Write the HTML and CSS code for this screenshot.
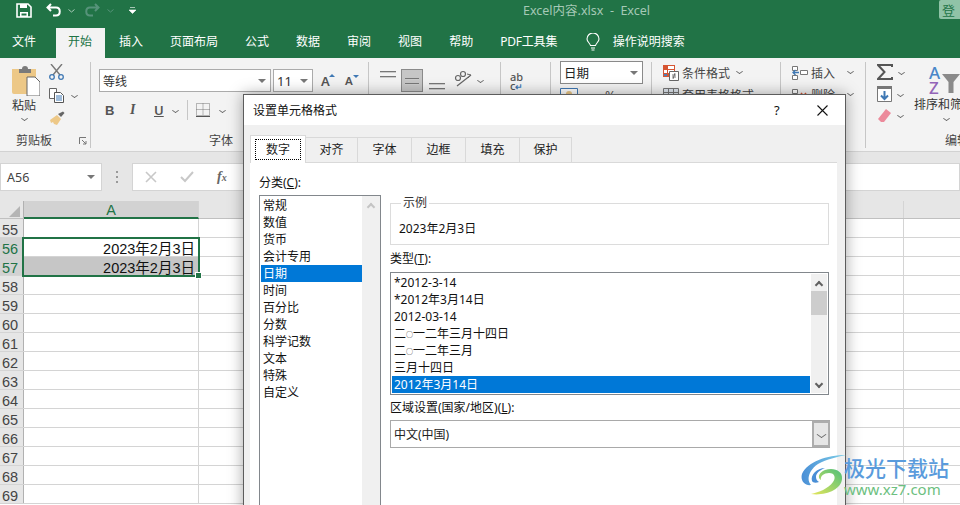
FILE: index.html
```html
<!DOCTYPE html>
<html lang="zh-CN">
<head>
  <meta charset="UTF-8">
  <title>Excel内容.xlsx - Excel</title>
  <link rel="stylesheet" href="styles.css">
</head>
<body>
<div class="app">
  <div class="titlebar">
    <div class="qat">
      <svg class="q-save" width="16" height="15" viewBox="0 0 16 15"><path d="M1 1h11l3 3v10H1z" fill="none" stroke="#fff" stroke-width="1.6"/><path d="M4 1h7v4H4zM4 9h8v5H4z" fill="#fff"/><path d="M5.500 10.500h5v2h-5z" fill="#217346"/></svg>
      <svg class="q-undo" width="16" height="14" viewBox="0 0 16 14"><path d="M5 1L1.500 4.500 5 8M2 4.500h8c5 0 5 8 0 8H7" fill="none" stroke="#fff" stroke-width="2"/></svg>
      <svg class="q-chev" width="7" height="4" viewBox="0 0 7 4"><path d="M.5.500l3 2.500 3-2.500" fill="none" stroke="#a9cbb8"/></svg>
      <svg class="q-redo" width="16" height="14" viewBox="0 0 16 14"><path d="M11 1l3.500 3.500L11 8M14 4.500H6c-5 0-5 8 0 8h3" fill="none" stroke="#56937a" stroke-width="2"/></svg>
      <svg class="q-chev2" width="7" height="4" viewBox="0 0 7 4"><path d="M.5.500l3 2.500 3-2.500" fill="none" stroke="#56937a"/></svg>
      <svg class="q-more" width="7" height="7" viewBox="0 0 7 7"><path d="M1 .500h5M0 3h7L3.500 6.500z" fill="#fff" stroke="#fff" stroke-width=".6"/></svg>
    </div>
    <div class="doc-name">Excel内容.xlsx&nbsp; - &nbsp;Excel</div>
    <div class="login">登</div>
  </div>

  <div class="tabs">
    <span class="tab tab-file">文件</span>
    <span class="tab tab-active">开始</span>
    <span class="tab">插入</span>
    <span class="tab">页面布局</span>
    <span class="tab">公式</span>
    <span class="tab">数据</span>
    <span class="tab">审阅</span>
    <span class="tab">视图</span>
    <span class="tab">帮助</span>
    <span class="tab tab-pdf">PDF工具集</span>
    <svg class="bulb" width="14" height="18" viewBox="0 0 14 18"><path d="M4.500 12.500C4 10 1 9 1 6a6 6 0 0 1 12 0c0 3-3 4-3.500 6.500zM5 15h4M5.500 17h3" fill="none" stroke="#fff" stroke-width="1.100"/></svg>
    <span class="tab tab-search">操作说明搜索</span>
  </div>

  <div class="ribbon">
    <section class="group g-clip">
      <div class="group-body clip-body">
        <div class="paste">
          <svg width="28" height="30" viewBox="0 0 28 30"><path d="M0 3h24v25H2a2 2 0 0 1-2-2z" fill="#edc887"/><path d="M7 3h3a3 3 0 0 1 6 0h3v4H7z" fill="#7a7a7a"/><path d="M15 11h8l5 5v14H15z" fill="#fff" stroke="#666"/></svg>
          <span>粘贴</span>
          <i class="chev"></i>
        </div>
        <div class="clip-tools">
          <svg width="15" height="16" viewBox="0 0 15 16"><path d="M2 0l9 11M13 0L4 11" stroke="#777" stroke-width="1.400"/><circle cx="3" cy="13" r="2.300" fill="none" stroke="#3f78b4" stroke-width="1.300"/><circle cx="12" cy="13" r="2.300" fill="none" stroke="#3f78b4" stroke-width="1.300"/></svg>
          <div class="copy-row">
            <svg width="15" height="15" viewBox="0 0 15 15"><path d="M.5.500h7v10h-7z" fill="#fff" stroke="#666"/><path d="M5.500 4.500h6l3 3v7h-9z" fill="#fff" stroke="#555"/><path d="M7 8h6M7 10h6M7 12h6" stroke="#3f78b4"/></svg>
            <i class="chev"></i>
          </div>
          <svg width="16" height="15" viewBox="0 0 16 15"><path d="M9 3l3 3 3.500-4L14 .5z" fill="#666"/><path d="M1 9l7-5 4 4-4 6-3-1-1-2-2 1z" fill="#edc887"/></svg>
        </div>
      </div>
      <div class="group-label clip-label"><span>剪贴板</span>
        <svg width="8" height="8" viewBox="0 0 8 8"><path d="M.5 7V.5H7M3 3l4 4M7 4v3H4" fill="none" stroke="#777"/></svg>
      </div>
    </section>

    <section class="group g-font">
      <div class="font-row">
        <div class="combo combo-font"><span>等线</span><i class="drop"></i></div>
        <div class="combo combo-size"><span>11</span><i class="drop"></i></div>
        <span class="grow-a">A<b class="up"></b></span>
        <span class="grow-a small">A<b class="down"></b></span>
      </div>
      <div class="font-row row-two">
        <b class="btn-b">B</b>
        <i class="btn-i">I</i>
        <u class="btn-u">U</u>
        <i class="chev"></i>
        <span class="vsep"></span>
        <svg width="14" height="14" viewBox="0 0 14 14"><path d="M.5.500h13v12H.5zM7 .5v12M.5 6.500h13" fill="none" stroke="#777" stroke-dasharray="1 1"/><path d="M0 13.500h14" stroke="#555"/></svg>
        <i class="chev"></i>
      </div>
      <div class="group-label font-label">字体</div>
    </section>

    <section class="group g-align">
      <div class="align-body">
        <span class="lines"><i></i><i></i></span>
        <span class="lines lines-on"><i></i><i></i></span>
        <span class="lines lines-low"><i></i><i></i></span>
        <svg class="orient" width="18" height="18" viewBox="0 0 18 18"><path d="M3 17L17 6" stroke="#666" stroke-width="1.200"/><path d="M14 9l3-3-4-1" fill="none" stroke="#666"/><circle cx="4" cy="9" r="2.500" fill="none" stroke="#666" stroke-width="1.200"/><circle cx="9" cy="5" r="2.500" fill="none" stroke="#666" stroke-width="1.200"/></svg>
        <i class="chev"></i>
      </div>
    </section>
    <section class="group g-wrap">
      <div class="wrap-icon"><span>ab</span><span>c<b>↵</b></span></div>
    </section>

    <section class="group g-num">
      <div class="combo combo-num"><span>日期</span><i class="drop"></i></div>
      <div class="num-row">
        <svg width="18" height="14" viewBox="0 0 18 14"><path d="M.5.500h17v11H.5z" fill="#fff" stroke="#3f78b4"/><circle cx="9" cy="6" r="3" fill="#edc887"/></svg>
        <i class="chev"></i>
        <span>%</span>
        <span class="num-comma">,</span>
      </div>
    </section>

    <section class="group g-style">
      <div class="style-row">
        <svg width="16" height="16" viewBox="0 0 16 16"><path d="M0 0h12v12H0z" fill="#d65532"/><path d="M5 1h6v3H5zM1 5h3v3H1zM5 5h6v3H5z" fill="#fff"/><path d="M1 9h3v2H1z" fill="#4e7fb5"/><path d="M6.500 6.500h9v9h-9z" fill="#fff" stroke="#666"/><path d="M9 10h4M9 12h4M10 14l2-6" stroke="#555" stroke-width=".8"/></svg>
        <span>条件格式</span><i class="chev"></i>
      </div>
      <div class="style-row row-low">
        <svg width="16" height="14" viewBox="0 0 16 14"><path d="M.5.500h15v13H.5zM5.500.5v13M10.500.5v13M.5 4.500h15M.5 9h15" fill="#dfe6ee" stroke="#777"/></svg>
        <span>套用表格格式</span>
      </div>
    </section>

    <section class="group g-cells">
      <div class="style-row">
        <svg width="16" height="16" viewBox="0 0 16 16"><path d="M.5 1.500h5v4h-5zM.5 10.500h5v4h-5zM8.500 5.500h7v4h-7z" fill="#fff" stroke="#777"/><path d="M7 7.500H1M3.500 5L1 7.500 3.500 10" fill="none" stroke="#3f78b4" stroke-width="1.300"/></svg>
        <span>插入</span><i class="chev"></i>
      </div>
      <div class="style-row row-low">
        <svg width="16" height="14" viewBox="0 0 16 14"><path d="M.5 1.500h5v4h-5zM.5 9.500h5v4h-5z" fill="#fff" stroke="#777"/><path d="M9 5l5 6M14 5l-5 6" stroke="#d65532" stroke-width="1.500"/></svg>
        <span>删除</span><i class="chev"></i>
      </div>
    </section>

    <section class="group g-edit">
      <div class="edit-col">
        <div class="edit-row"><svg width="16" height="16" viewBox="0 0 16 16"><path d="M15 3V1H1l6.500 7L1 15h14v-2" fill="none" stroke="#555" stroke-width="2"/></svg><i class="chev"></i></div>
        <div class="edit-row"><svg width="15" height="16" viewBox="0 0 15 16"><path d="M.5.500h14v15H.5z" fill="#fff" stroke="#777"/><path d="M0 0h15v3H0z" fill="#777"/><path d="M7.500 5v8M4 9.500l3.500 3.500L11 9.500" fill="none" stroke="#3f78b4" stroke-width="2"/></svg><i class="chev"></i></div>
        <div class="edit-row"><svg width="15" height="15" viewBox="0 0 15 15"><path d="M9 1l5 4-7 9H4L1 11z" fill="#ec8a9b"/></svg><i class="chev"></i></div>
      </div>
      <div class="sort">
        <div class="sort-icon"><span class="az"><em>A</em><em class="z">Z</em></span>
          <svg width="18" height="20" viewBox="0 0 18 20"><path d="M0 0h18l-6.500 8v11h-5V8z" fill="#8a8a8a"/></svg>
        </div>
        <span class="sort-text">排序和筛选</span>
        <i class="chev"></i>
      </div>
      <div class="group-label edit-label">编辑</div>
    </section>
  </div>

  <div class="formula">
    <div class="namebox"><span>A56</span><i class="drop"></i></div>
    <span class="dots"></span>
    <div class="fx-box">
      <svg width="12" height="12" viewBox="0 0 12 12"><path d="M1 1l10 10M11 1L1 11" stroke="#c8c8c8" stroke-width="1.600"/></svg>
      <svg width="14" height="12" viewBox="0 0 14 12"><path d="M1 6l4 4 8-9" fill="none" stroke="#c8c8c8" stroke-width="2"/></svg>
      <span class="fx">f<small>x</small></span>
    </div>
  </div>

  <div class="sheet">
    <div class="row head">
      <span class="rh corner"><i></i></span>
      <span class="ca on">A</span>
      <span class="cb"></span>
      <span class="cc"></span>
    </div>
    <div class="row"><span class="rh">55</span><span class="ca"></span><span class="cb"></span><span class="cc"></span></div>
    <div class="row"><span class="rh on">56</span><span class="ca">2023年2月3日</span><span class="cb"></span><span class="cc"></span></div>
    <div class="row"><span class="rh on">57</span><span class="ca sel">2023年2月3日</span><span class="cb"></span><span class="cc"></span></div>
    <div class="row"><span class="rh">58</span><span class="ca"></span><span class="cb"></span><span class="cc"></span></div>
    <div class="row"><span class="rh">59</span><span class="ca"></span><span class="cb"></span><span class="cc"></span></div>
    <div class="row"><span class="rh">60</span><span class="ca"></span><span class="cb"></span><span class="cc"></span></div>
    <div class="row"><span class="rh">61</span><span class="ca"></span><span class="cb"></span><span class="cc"></span></div>
    <div class="row"><span class="rh">62</span><span class="ca"></span><span class="cb"></span><span class="cc"></span></div>
    <div class="row"><span class="rh">63</span><span class="ca"></span><span class="cb"></span><span class="cc"></span></div>
    <div class="row"><span class="rh">64</span><span class="ca"></span><span class="cb"></span><span class="cc"></span></div>
    <div class="row"><span class="rh">65</span><span class="ca"></span><span class="cb"></span><span class="cc"></span></div>
    <div class="row"><span class="rh">66</span><span class="ca"></span><span class="cb"></span><span class="cc"></span></div>
    <div class="row"><span class="rh">67</span><span class="ca"></span><span class="cb"></span><span class="cc"></span></div>
    <div class="row"><span class="rh">68</span><span class="ca"></span><span class="cb"></span><span class="cc"></span></div>
    <div class="row"><span class="rh">69</span><span class="ca"></span><span class="cb"></span><span class="cc"></span></div>
    <div class="selection"><i></i></div>
  </div>

  <div class="dialog">
    <div class="dlg-title">
      <span>设置单元格格式</span>
      <span class="dlg-help">?</span>
      <svg width="11" height="11" viewBox="0 0 11 11"><path d="M.5.500l10 10M10.500.5l-10 10" stroke="#111" stroke-width="1.100"/></svg>
    </div>
    <div class="dlg-tabs">
      <span class="dtab dtab-on"><span>数字</span></span>
      <span class="dtab w52">对齐</span>
      <span class="dtab">字体</span>
      <span class="dtab">边框</span>
      <span class="dtab">填充</span>
      <span class="dtab w52">保护</span>
    </div>
    <div class="panel">
      <div class="col-left">
        <div class="lbl">分类(<u>C</u>):</div>
        <div class="catlist">
          <ul>
            <li>常规</li>
            <li>数值</li>
            <li>货币</li>
            <li>会计专用</li>
            <li class="picked">日期</li>
            <li>时间</li>
            <li>百分比</li>
            <li>分数</li>
            <li>科学记数</li>
            <li>文本</li>
            <li>特殊</li>
            <li>自定义</li>
          </ul>
          <div class="vbar"><i class="arrow-up dim"></i></div>
        </div>
      </div>
      <div class="col-right">
        <fieldset class="sample">
          <legend>示例</legend>
          <div>2023年2月3日</div>
        </fieldset>
        <div class="lbl lbl-type">类型(<u>T</u>):</div>
        <div class="typelist">
          <ul>
            <li>*2012-3-14</li>
            <li>*2012年3月14日</li>
            <li>2012-03-14</li>
            <li>二<span class="ling">○</span>一二年三月十四日</li>
            <li>二<span class="ling">○</span>一二年三月</li>
            <li>三月十四日</li>
            <li class="picked">2012年3月14日</li>
          </ul>
          <div class="vbar small">
            <i class="arrow-up"></i>
            <b class="thumb"></b>
            <i class="arrow-down"></i>
          </div>
        </div>
        <div class="lbl lbl-locale">区域设置(国家/地区)(<u>L</u>):</div>
        <div class="locale">
          <span>中文(中国)</span>
          <span class="locale-btn"><i class="chev"></i></span>
        </div>
      </div>
    </div>
  </div>

  <div class="mark">
    <svg width="46" height="42" viewBox="0 0 46 42">
      <defs>
        <linearGradient id="sw1" x1="0" y1="0" x2="1" y2="0"><stop offset="0" stop-color="#4a8fd6"/><stop offset="1" stop-color="#7fd0e8"/></linearGradient>
        <linearGradient id="sw2" x1="0" y1="1" x2="1" y2="0"><stop offset="0" stop-color="#e6e65a"/><stop offset="1" stop-color="#4fbf7a"/></linearGradient>
      </defs>
      <path d="M45 1C26 1 6 8 1 20c-2 7 3 12 9 11C5 26 8 16 17 10 26 5 36 3 45 1z" fill="url(#sw1)"/>
      <path d="M10 40c14 2 30-4 31-15 1-8-8-12-17-9-6 2-8 8-4 10-1-4 3-7 8-7 6 0 7 5 4 9-5 7-14 10-22 12z" fill="url(#sw2)"/>
      <path d="M11 27c-2-6 5-13 13-13-5 2-9 5-9 9 0 2 1 4 3 5-3 1-6 1-7-1z" fill="#4a8fd6"/>
    </svg>
    <div class="mark-text">
      <strong>极光下载站</strong>
      <span>www.xz7.com</span>
    </div>
  </div>
</div>
</body>
</html>
```

FILE: styles.css
```css
html, body {
  margin: 0;
  padding: 0;
  height: 100%;
  overflow: hidden;
}
body {
  font-family: "Noto Sans", "Noto Sans CJK SC", sans-serif;
  font-size: 12px;
  color: #444;
}
.app {
  position: relative;
  width: 960px;
  height: 505px;
  overflow: hidden;
  background: #fff;
}
ul {
  list-style: none;
  margin: 0;
  padding: 0;
}

/* title bar */
.titlebar {
  height: 28px;
  background: #217346;
  display: flex;
  position: relative;
}
.qat {
  display: flex;
  align-items: flex-start;
  padding-left: 16px;
  width: 523px;
  box-sizing: border-box;
}
.q-save { margin-top: 3px; }
.q-undo { margin: 3px 0 0 14px; }
.q-chev { margin: 9px 0 0 6px; }
.q-redo { margin: 3px 0 0 9px; }
.q-chev2 { margin: 9px 0 0 7px; }
.q-more { margin: 7px 0 0 15px; }
.doc-name {
  flex: 1;
  color: #a5c9b6;
  line-height: 21px;
  font-size: 12.500px;
}
.login {
  width: 21px;
  height: 19px;
  line-height: 20px;
  padding-left: 3px;
  box-sizing: border-box;
  border-radius: 2px 0 0 2px;
  background: #90c3a7;
  color: #217346;
  font-size: 13px;
  overflow: hidden;
}

/* tabs */
.tabs {
  height: 30px;
  background: #217346;
  display: flex;
  align-items: stretch;
}
.tab {
  color: #fff;
  line-height: 27px;
  padding: 0 13.500px;
}
.tab-file { padding: 0 20px 0 12px; }
.tab-active {
  padding: 0 13px 0 12px;
  background: #f3f3f3;
  color: #217346;
}
.tab:nth-child(3) { padding-left: 14px; }
.tab-pdf { letter-spacing: -.2px; }
.tab-search { padding: 0 0 0 13px; }
.bulb { margin: 5px 0 0 15px; }

/* ribbon */
.ribbon {
  height: 94px;
  padding-top: 4px;
  box-sizing: border-box;
  background: #f3f3f3;
  border-bottom: 1px solid #d2d2d2;
  display: flex;
  align-items: flex-start;
}
.group {
  height: 86px;
  box-sizing: border-box;
  flex: none;
  border-right: 1px solid #c6c6c6;
  display: flex;
  flex-direction: column;
  position: relative;
}
.group-label {
  margin-top: auto;
  line-height: 14px;
  text-align: center;
}
.g-clip { width: 91px; }
.g-font { width: 278px; padding-left: 8px; }
.g-align { width: 132px; }
.g-wrap { width: 50px; }
.g-num { width: 101px; padding: 0 0 0 9px; }
.g-style { width: 129px; padding-left: 11px; }
.g-cells { width: 85px; padding-left: 11px; }
.g-edit { width: 95px; border: none; flex-direction: row; align-items: flex-start; padding-left: 11px; }

.chev {
  display: inline-block;
  width: 4px;
  height: 4px;
  border-right: 1px solid #666;
  border-bottom: 1px solid #666;
  transform: scale(1, .7) rotate(45deg);
}
.drop {
  width: 0;
  height: 0;
  border-left: 4px solid transparent;
  border-right: 4px solid transparent;
  border-top: 4px solid #777;
}

.clip-body {
  display: flex;
  padding: 4px 0 0 12px;
}
.paste {
  width: 28px;
  display: flex;
  flex-direction: column;
  align-items: flex-start;
  line-height: 16px;
  color: #333;
}
.paste span { margin-top: 2px; font-size: 12px; white-space: nowrap; }
.paste .chev { margin: 2px 0 0 10px; }
.clip-tools {
  margin: -2px 0 0 9px;
  display: flex;
  flex-direction: column;
  gap: 8px;
}
.copy-row {
  display: flex;
  align-items: center;
  gap: 8px;
}
.clip-label {
  display: flex;
  justify-content: space-between;
  align-items: center;
  padding: 0 3px 0 16px;
}

.font-row {
  display: flex;
  align-items: center;
  margin-top: 7px;
}
.combo {
  height: 23px;
  flex: none;
  box-sizing: border-box;
  border: 1px solid #ababab;
  background: #fff;
  display: flex;
  align-items: center;
  justify-content: space-between;
  padding: 0 4px 0 3px;
  color: #333;
  font-size: 12px;
}
.combo-font { width: 172px; }
.combo-size { width: 40px; margin-left: 2px; }
.combo-size span { font-size: 13px; }
.combo-num {
  width: 83px;
  margin-top: -1px;
  border-color: #8a8a8a;
  font-size: 12.500px;
  color: #222;
  padding-left: 3px;
}
.num-row {
  display: flex;
  align-items: center;
  margin-top: 2px;
  font-size: 13px;
  color: #555;
}
.num-row .chev { margin: 0 0 0 8px; }
.num-row span { margin-left: 14px; }
.num-row .num-comma { margin-left: 18px; }
.grow-a {
  position: relative;
  margin-left: 8px;
  width: 14px;
  font-size: 13px;
  font-weight: 600;
  color: #555;
}
.grow-a.small { margin-left: 10px; font-size: 11.500px; }
.grow-a b {
  position: absolute;
  top: 2px;
  right: 0;
  width: 0;
  height: 0;
  border-left: 3px solid transparent;
  border-right: 3px solid transparent;
}
.grow-a .up { border-bottom: 3px solid #3f78b4; }
.grow-a .down { border-top: 3px solid #3f78b4; }
.row-two {
  margin-top: 7px;
  color: #555;
  padding-left: 6px;
  height: 22px;
  font-size: 13px;
}
.btn-b { width: 8px; font-weight: 700; font-family: "Liberation Sans", sans-serif; }
.btn-i { width: 8px; margin-left: 17px; font-family: "Liberation Serif", serif; font-size: 14px; font-weight: 700; }
.btn-u { width: 9px; margin-left: 16px; font-weight: 600; }
.row-two .chev { margin: 0 9px 0 10px; }
.vsep {
  width: 1px;
  height: 20px;
  background: #c6c6c6;
  margin-right: 8px;
}
.font-label { padding-right: 25px; }

.align-body {
  display: flex;
  align-items: center;
  padding: 7px 0 0 11px;
}
.lines {
  width: 16px;
  height: 23px;
  box-sizing: border-box;
  display: flex;
  flex-direction: column;
  gap: 3px;
  justify-content: flex-start;
  padding-top: 2px;
}
.lines i {
  display: block;
  height: 1px;
  background: #777;
  border-bottom: 1px solid #ccc;
}
.lines-on {
  width: 22px;
  margin-left: 5px;
  padding: 8px 3px 0;
  background: #c6c6c6;
  border: 1px solid #8a8a8a;
}
.lines-low {
  margin-left: 6px;
  padding-top: 14px;
}
.orient { margin: -6px 0 0 9px; }
.align-body .chev { margin-left: 6px; }

.wrap-icon {
  margin: 10px 0 0 9px;
  font-size: 11px;
  font-weight: 500;
  color: #555;
}
.wrap-icon span { display: block; height: 9px; line-height: 9px; }
.wrap-icon b { color: #3f78b4; font-size: 9px; }

.style-row {
  display: flex;
  align-items: center;
  height: 21px;
  color: #444;
  font-size: 12px;
}
.style-row span { margin-left: 3px; white-space: nowrap; }
.style-row .chev { margin-left: 7px; margin-top: -2px; }
.row-low { height: 23px; }
.g-cells .style-row .chev { margin-left: 13px; }

.edit-col {
  width: 32px;
  flex: none;
  display: flex;
  flex-direction: column;
  gap: 6px;
  padding-top: 2px;
}
.edit-row {
  display: flex;
  align-items: center;
  gap: 6px;
}
.sort {
  margin-left: 5px;
  width: 60px;
  flex: none;
  display: flex;
  flex-direction: column;
  align-items: flex-start;
}
.sort-icon {
  display: flex;
  margin: 3px 0 0 15px;
}
.az {
  width: 13px;
  display: flex;
  flex-direction: column;
  font-weight: 500;
  font-size: 17px;
  line-height: 15px;
}
.az em { font-style: normal; color: #4a86c8; }
.az .z { color: #9365b8; }
.sort-icon svg { margin-top: 9px; margin-left: 0; }
.sort-text {
  margin-top: 2px;
  line-height: 16px;
  white-space: nowrap;
  color: #333;
}
.sort .chev { margin: 3px 0 0 30px; }
.edit-label {
  position: absolute;
  left: 79px;
  bottom: 0;
  white-space: nowrap;
}

/* formula bar */
.formula {
  height: 49px;
  background: #e6e6e6;
  display: flex;
  align-items: flex-start;
  padding-top: 11px;
  box-sizing: border-box;
}
.namebox {
  width: 102px;
  height: 28px;
  box-sizing: border-box;
  background: #fff;
  border: 1px solid #d4d4d4;
  display: flex;
  align-items: center;
  justify-content: space-between;
  padding: 0 6px;
  font-size: 12.500px;
}
.dots {
  width: 2px;
  height: 12px;
  margin: 8px 14px 0 14px;
  background: repeating-linear-gradient(#999 0 2px, transparent 2px 5px);
}
.fx-box {
  flex: 1;
  height: 28px;
  box-sizing: border-box;
  background: #fff;
  border: 1px solid #d4d4d4;
  display: flex;
  align-items: center;
  padding-left: 12px;
  gap: 23px;
}
.fx {
  font-family: "Liberation Serif", serif;
  font-style: italic;
  font-weight: 700;
  font-size: 14px;
  color: #666;
}
.fx small { font-size: 10px; }

/* sheet */
.sheet {
  position: relative;
  font-family: "Liberation Sans", "Noto Sans CJK SC", sans-serif;
  font-size: 14.500px;
  color: #111;
}
.row {
  display: flex;
  height: 19px;
  box-sizing: border-box;
  line-height: 23px;
  border-bottom: 1px solid #d4d4d4;
}
.row.head {
  height: 18px;
  background: #e6e6e6;
  border-bottom: 1px solid #c0c0c0;
}
.rh {
  width: 24px;
  flex: none;
  box-sizing: border-box;
  background: #e6e6e6;
  border-right: 1px solid #b1b1b1;
  padding-left: 2px;
  color: #444;
}
.rh.on {
  background: #d2d2d2;
  color: #217346;
}
.corner { position: relative; }
.corner i {
  position: absolute;
  left: 9px;
  top: 5px;
  border-left: 11px solid transparent;
  border-bottom: 11px solid #b5b5b5;
}
.ca {
  width: 175px;
  flex: none;
  box-sizing: border-box;
  border-right: 1px solid #d4d4d4;
  text-align: right;
  padding-right: 3px;
  white-space: nowrap;
  overflow: hidden;
}
.ca.on {
  background: #d2d2d2;
  border-bottom: 2px solid #217346;
  text-align: center;
  padding: 0;
  color: #217346;
  height: 18px;
  line-height: 18px;
}
.ca.sel {
  background: #c6c6c6;
}
.cb {
  width: 705px;
  flex: none;
  box-sizing: border-box;
  border-right: 1px solid #d4d4d4;
}
.cc { flex: 1; }
.selection {
  position: absolute;
  left: 22px;
  top: 36px;
  width: 178px;
  height: 40px;
  box-sizing: border-box;
  border: 2px solid #217346;
}
.selection i {
  position: absolute;
  right: -4px;
  bottom: -4px;
  width: 5px;
  height: 5px;
  background: #217346;
  border: 1px solid #fff;
}

/* dialog */
.dialog {
  position: absolute;
  left: 243px;
  top: 94px;
  width: 603px;
  height: 430px;
  box-sizing: border-box;
  border: 1px solid #5c5c5c;
  background: #f0f0f0;
  box-shadow: 0 0 14px rgba(0, 0, 0, .35);
  color: #111;
}
.dlg-title {
  height: 30px;
  background: #fff;
  display: flex;
  align-items: center;
  padding-left: 9px;
}
.dlg-title span:first-child { width: 521px; }
.dlg-help { width: 43px; font-size: 13px; }
.dlg-tabs {
  height: 37px;
  padding: 10px 0 0 6px;
  box-sizing: border-box;
  display: flex;
  align-items: flex-end;
  position: relative;
  z-index: 1;
}
.dtab {
  width: 54px;
  height: 25px;
  box-sizing: border-box;
  border: 1px solid #d9d9d9;
  border-left: none;
  border-bottom: none;
  text-align: center;
  line-height: 24px;
  color: #222;
}
.w52 { width: 52px; }
.dtab-on {
  width: 56px;
  height: 28px;
  margin-bottom: -1px;
  background: #fff;
  border-left: 1px solid #d9d9d9;
  padding: 3px 4px;
}
.dtab-on span {
  display: block;
  height: 21px;
  line-height: 20px;
  border: 1px dotted #000;
  box-sizing: border-box;
}
.panel {
  margin-left: 6px;
  width: 587px;
  height: 400px;
  background: #fff;
  border-top: 1px solid #d9d9d9;
  box-sizing: border-box;
  display: flex;
}
.lbl { line-height: 16px; }
.col-left {
  width: 140px;
  flex: none;
  padding: 12px 0 0 9px;
  box-sizing: border-box;
}
.catlist {
  margin-top: 4px;
  width: 122px;
  height: 320px;
  box-sizing: border-box;
  border: 1px solid #82878c;
  display: flex;
}
.catlist ul { flex: 1; padding: 1px 0 0 1px; }
.catlist li, .typelist li {
  height: 17px;
  line-height: 17px;
  padding-left: 2px;
}
.ling { font-size: 7px; vertical-align: 1px; }
.picked {
  background: #0078d7;
  color: #fff;
}
.vbar {
  width: 18px;
  flex: none;
  background: #f0f0f0;
  display: flex;
  flex-direction: column;
  align-items: center;
}
.arrow-up, .arrow-down {
  width: 6px;
  height: 6px;
  margin-top: 8px;
  border-left: 2px solid #606060;
  border-top: 2px solid #606060;
  box-sizing: border-box;
  transform: rotate(45deg);
}
.arrow-down {
  margin-top: 66px;
  transform: rotate(225deg);
}
.dim { border-color: #c4c4c4; }
.col-right {
  width: 439px;
  flex: none;
  padding-top: 32px;
}
.sample {
  margin: 0;
  padding: 10px 0 0 8px;
  height: 50px;
  box-sizing: border-box;
  border: 1px solid #dcdcdc;
  line-height: 16px;
}
.sample legend {
  padding: 0 2px;
  margin-left: 2px;
  line-height: 16px;
  color: #333;
}
.lbl-type { margin-top: 6px; }
.typelist {
  margin-top: 5px;
  height: 123px;
  box-sizing: border-box;
  border: 1px solid #82878c;
  display: flex;
  padding: 1px;
}
.typelist ul { flex: 1; }
.vbar.small {
  width: 16px;
  margin-left: 1px;
}
.thumb {
  display: block;
  width: 100%;
  height: 24px;
  margin-top: 3px;
  background: #cdcdcd;
}
.lbl-locale { margin-top: 5px; }
.locale {
  margin-top: 4px;
  width: 440px;
  height: 28px;
  box-sizing: border-box;
  border: 1px solid #a9a9a9;
  border-right: none;
  display: flex;
  align-items: center;
  justify-content: space-between;
  padding-left: 3px;
  color: #222;
}
.locale-btn {
  width: 18px;
  height: 26px;
  box-sizing: border-box;
  background: #e6e6e6;
  border: 2px solid #adadad;
  display: flex;
  align-items: center;
  justify-content: center;
}
.locale-btn .chev {
  width: 6px;
  height: 6px;
}

/* watermark */
.mark {
  position: absolute;
  left: 801px;
  top: 454px;
  display: flex;
}
.mark-text {
  display: flex;
  flex-direction: column;
  margin: 2px 0 0 -3px;
}
.mark-text strong {
  font-size: 21px;
  line-height: 24px;
  color: #5a9bdc;
  font-weight: 500;
  white-space: nowrap;
}
.mark-text span {
  font-size: 15px;
  line-height: 19px;
  color: #6dbf80;
}
```
